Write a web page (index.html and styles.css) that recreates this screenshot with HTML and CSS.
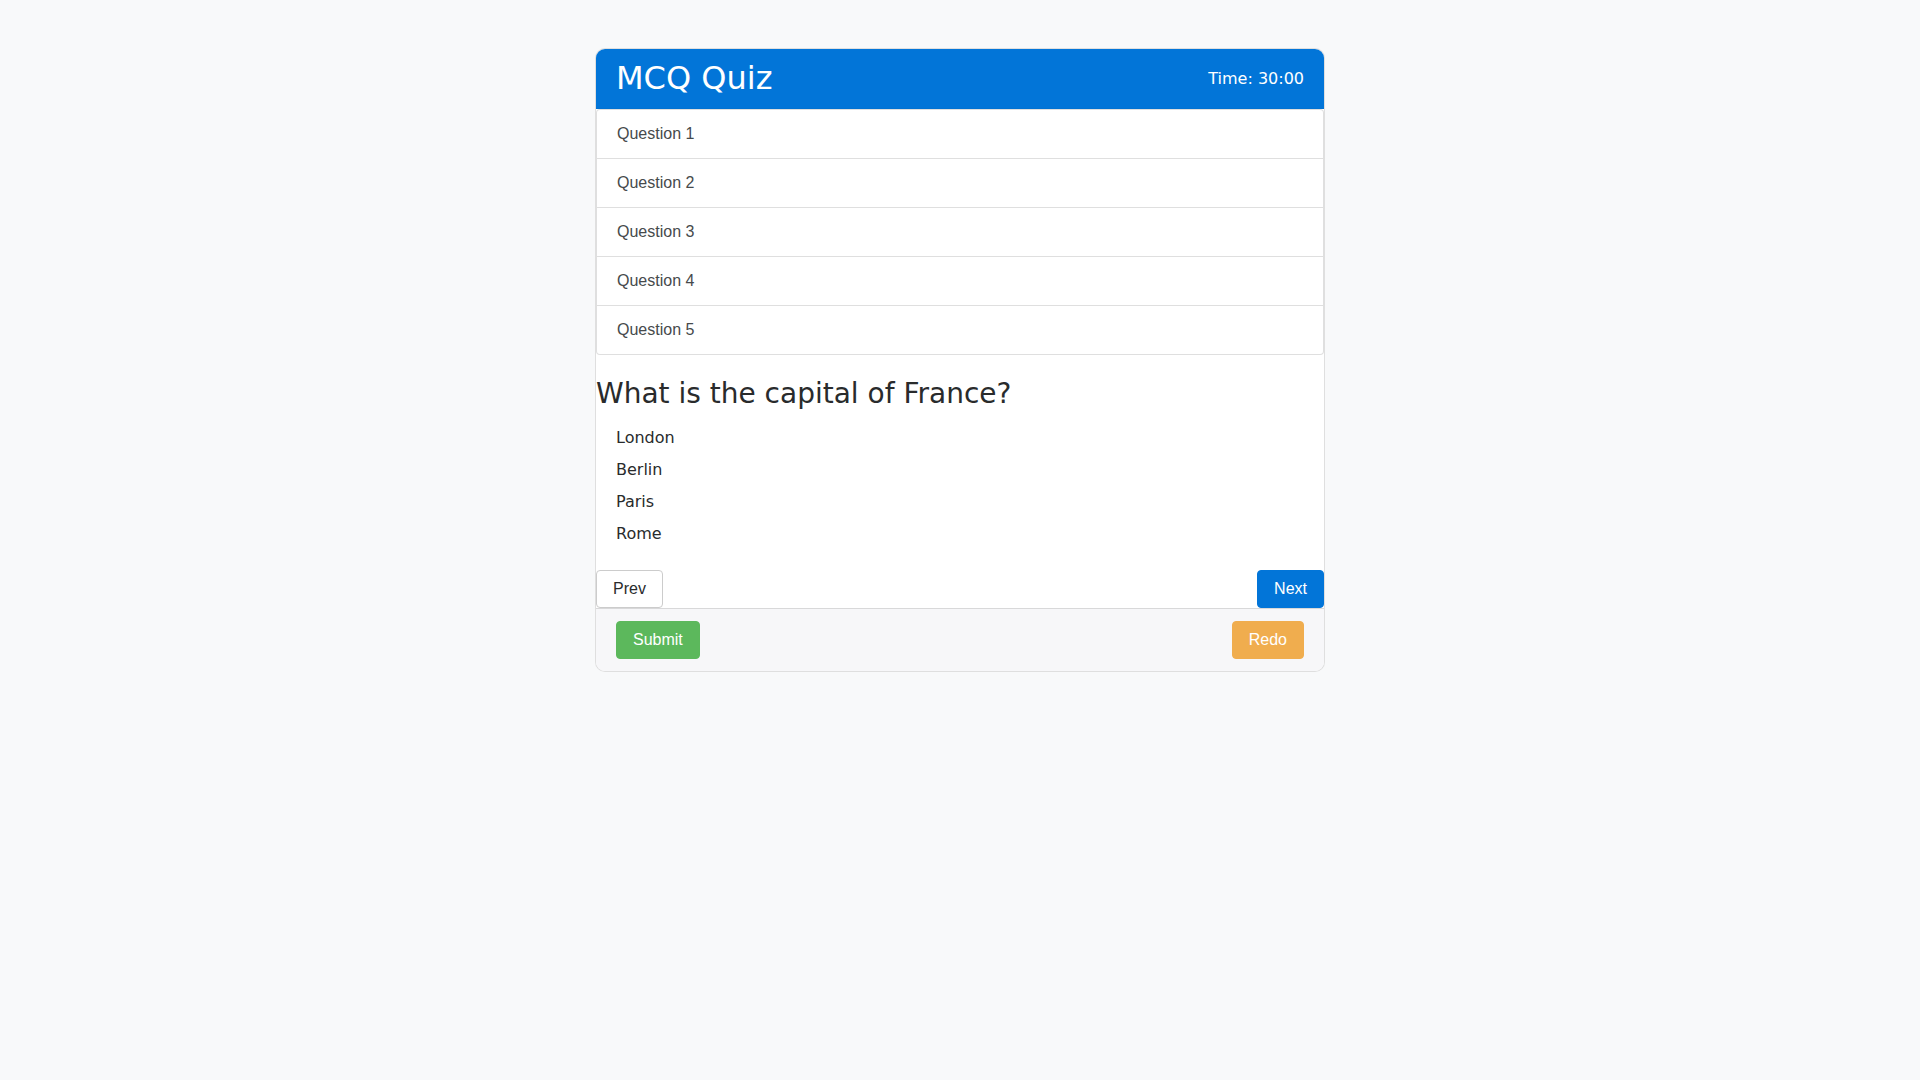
FILE: index.html
```html
<!DOCTYPE html>
<html lang="en">
<head>
<meta charset="utf-8">
<title>MCQ Quiz</title>
<link rel="stylesheet" href="styles.css">
</head>
<body>
<div class="card">
  <div class="card-header">
    <h2 class="title">MCQ Quiz</h2>
    <span class="timer">Time: 30:00</span>
  </div>
  <div class="list-group">
    <div class="list-item">Question 1</div>
    <div class="list-item">Question 2</div>
    <div class="list-item">Question 3</div>
    <div class="list-item">Question 4</div>
    <div class="list-item">Question 5</div>
  </div>
  <div class="quiz-body">
    <h3 class="question">What is the capital of France?</h3>
    <div class="options">
      <div class="option">London</div>
      <div class="option">Berlin</div>
      <div class="option">Paris</div>
      <div class="option">Rome</div>
    </div>
    <div class="nav">
      <button class="btn btn-light">Prev</button>
      <button class="btn btn-primary">Next</button>
    </div>
  </div>
  <div class="card-footer">
    <button class="btn btn-success">Submit</button>
    <button class="btn btn-warning">Redo</button>
  </div>
</div>
</body>
</html>
```
FILE: styles.css
```css
html, body {
  margin: 0;
  padding: 0;
}
body {
  background: #f8f9fa;
  font-family: "DejaVu Sans", sans-serif;
  font-size: 16px;
  color: #292b2c;
  padding-top: 48px;
}
.card {
  width: 730px;
  box-sizing: border-box;
  margin: 0 auto;
  background: #fff;
  border: 1px solid rgba(0,0,0,.125);
  border-radius: 10px;
}
.card-header {
  display: flex;
  justify-content: space-between;
  align-items: center;
  padding: 12px 20px;
  background: #0275d8;
  color: #fff;
  border-bottom: 1px solid #0272d2;
  border-radius: 9px 9px 0 0;
}
.title {
  margin: 0;
  font-size: 32px;
  font-weight: 400;
  line-height: 1.1;
}
.timer {
  font-size: 16px;
  line-height: 24px;
}
.list-group {
  display: flex;
  flex-direction: column;
}
.list-item {
  font-family: "Liberation Sans", Arial, sans-serif;
  font-size: 16px;
  line-height: 24px;
  color: #464a4c;
  padding: 12px 20px;
  border: 1px solid rgba(0,0,0,.125);
  margin-bottom: -1px;
  background: #fff;
}
.list-item:first-child {
  border-radius: 4px 4px 0 0;
}
.list-item:last-child {
  border-radius: 0 0 4px 4px;
  margin-bottom: 0;
}
.quiz-body {
  display: flow-root;
}
.question {
  margin: 24px 0 16.5px;
  font-size: 28px;
  font-weight: 400;
  line-height: 1.1;
  color: #292b2c;
}
.option {
  padding-left: 20px;
  margin-bottom: 8px;
  line-height: 24px;
  font-size: 16px;
}
.nav {
  display: flex;
  justify-content: space-between;
  margin-top: 23.5px;
}
.btn {
  font-family: "Liberation Sans", Arial, sans-serif;
  font-size: 16px;
  line-height: 20px;
  padding: 8px 16px;
  border: 1px solid transparent;
  border-radius: 4px;
  margin: 0;
}
.btn-light {
  background: #fff;
  border-color: #ccc;
  color: #292b2c;
}
.btn-primary {
  background: #0275d8;
  border-color: #0275d8;
  color: #fff;
}
.btn-success {
  background: #5cb85c;
  border-color: #5cb85c;
  color: #fff;
}
.btn-warning {
  background: #f0ad4e;
  border-color: #f0ad4e;
  color: #fff;
}
.card-footer {
  display: flex;
  justify-content: space-between;
  padding: 12px 20px;
  background: #f7f7f9;
  border-top: 1px solid rgba(0,0,0,.125);
  border-radius: 0 0 9px 9px;
}
```
